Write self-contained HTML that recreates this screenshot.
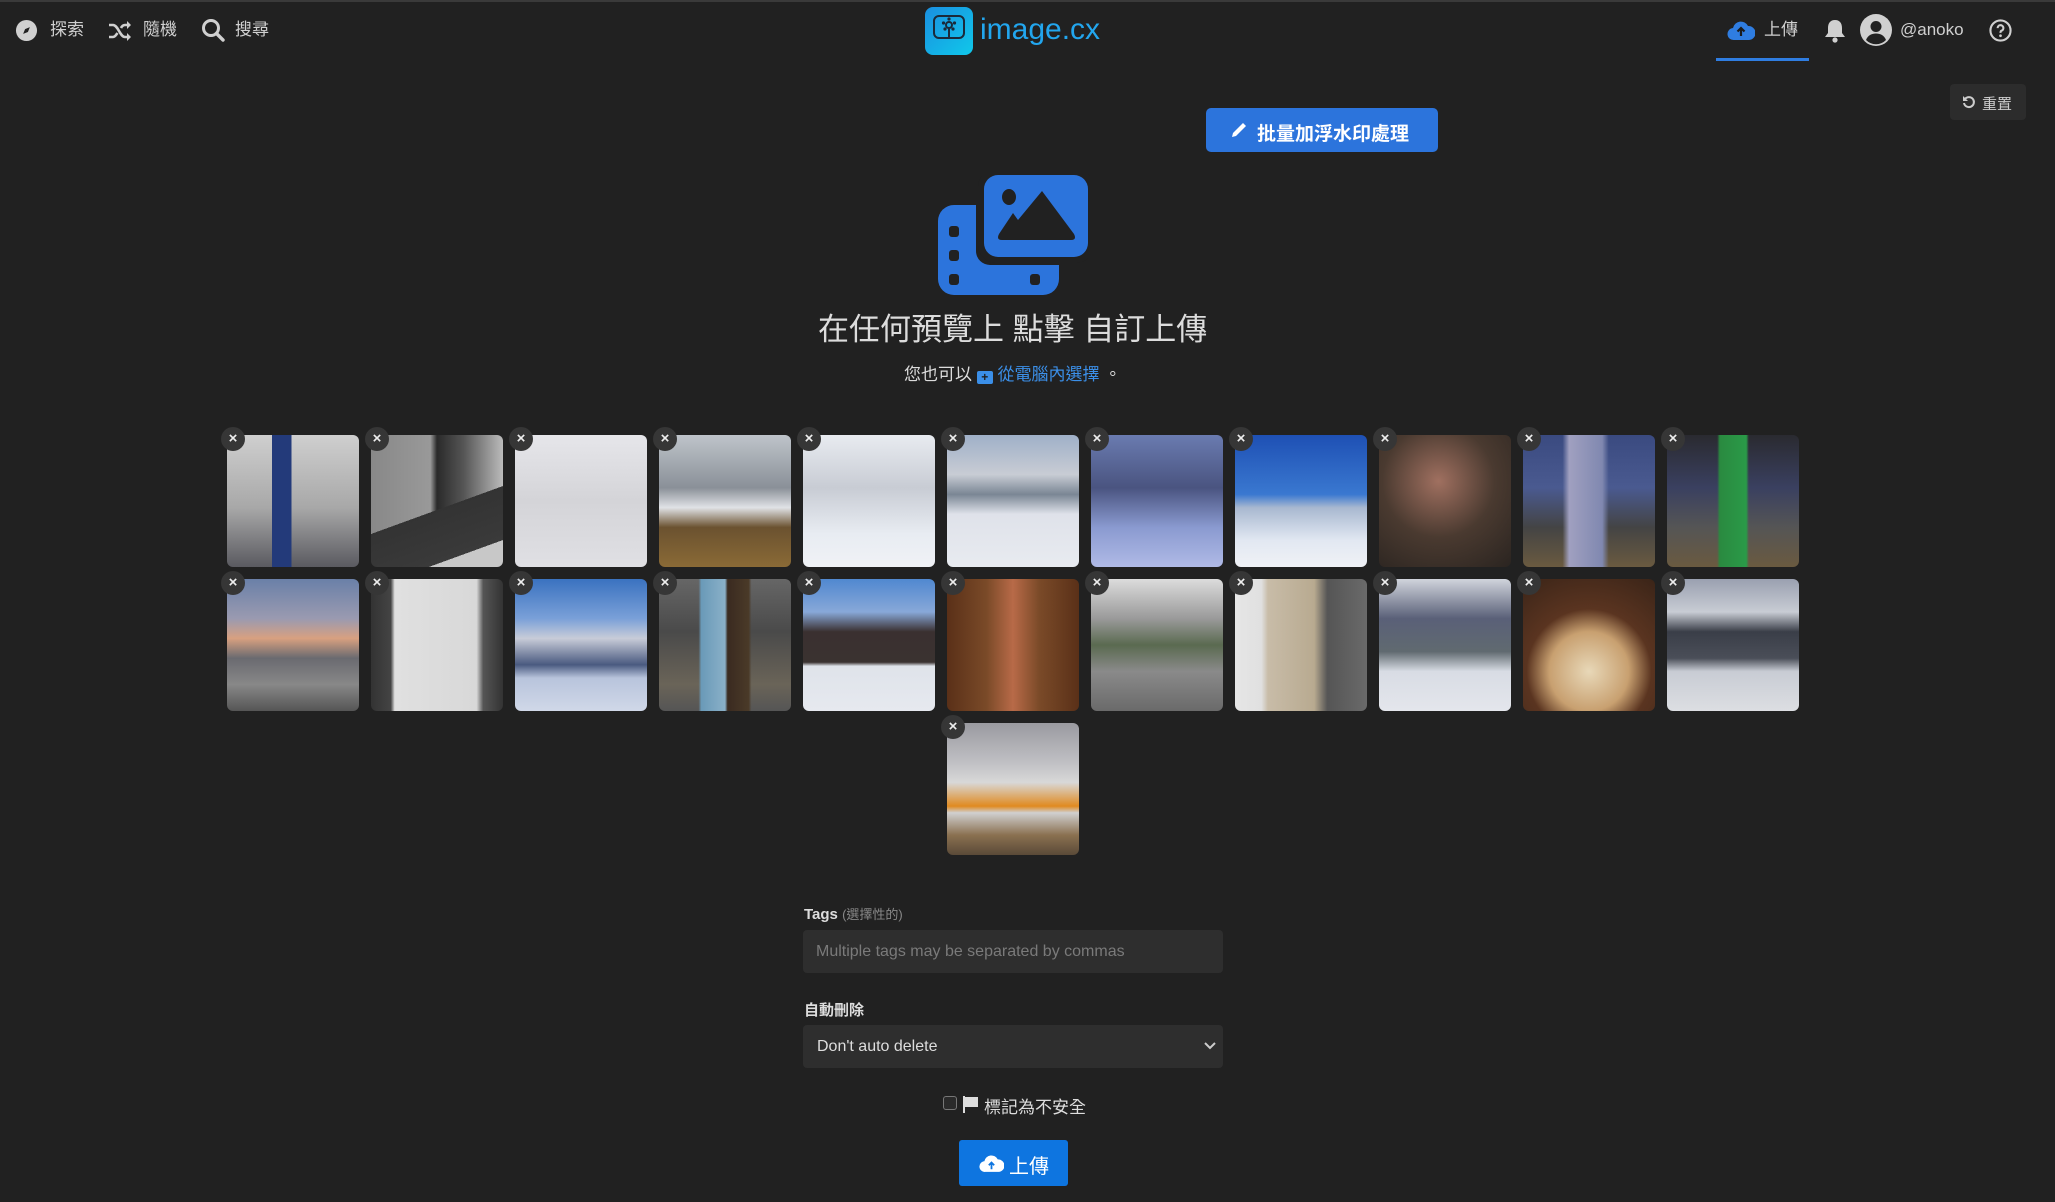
<!DOCTYPE html>
<html><head><meta charset="utf-8"><style>
*{box-sizing:border-box;margin:0;padding:0}
body{width:2055px;height:1202px;background:#212121;position:relative;overflow:hidden;font-family:"Liberation Sans","Noto Sans CJK TC",sans-serif;color:#ddd}
.a{position:absolute}
.nav{color:#d0d0d0;font-size:17px;line-height:20px}
.th{position:absolute;width:132px;height:132px;border-radius:6px;overflow:hidden}
.x{position:absolute;width:24px;height:24px;border-radius:50%;background:#363636;color:#eee;font-size:15px;line-height:24px;text-align:center;font-weight:bold}
</style></head><body>
<div class="a" style="left:0;top:0;width:2055px;height:2px;background:#3a3a3a"></div>
<!-- left nav -->
<svg class="a" style="left:15px;top:19px" width="23" height="23" viewBox="0 0 24 24"><circle cx="12" cy="12" r="11" fill="#d0d0d0"/><path d="M15.5 8.5 L13.5 13.5 L8.5 15.5 L10.5 10.5Z" fill="#212121"/></svg>
<div class="a nav" style="left:50px;top:20px">探索</div>
<svg class="a" style="left:108px;top:20px" width="24" height="22" viewBox="0 0 24 22"><path d="M1 5h4c5 0 7 12 12 12h3M1 17h4c2 0 3-2 4.5-4M13 8c1-2 2-3 4-3h3" stroke="#d0d0d0" stroke-width="2.6" fill="none"/><path d="M19 1l4 4-4 4zM19 13l4 4-4 4z" fill="#d0d0d0"/></svg>
<div class="a nav" style="left:143px;top:20px">隨機</div>
<svg class="a" style="left:201px;top:18px" width="24" height="25" viewBox="0 0 24 25"><circle cx="10" cy="10" r="7.5" stroke="#d0d0d0" stroke-width="3" fill="none"/><path d="M15.5 15.5 L22 22" stroke="#d0d0d0" stroke-width="3.4" stroke-linecap="round"/></svg>
<div class="a nav" style="left:235px;top:20px">搜尋</div>
<!-- logo -->
<div class="a" style="left:925px;top:7px;width:48px;height:48px;border-radius:8px;background:linear-gradient(135deg,#1a8fe0,#10c8ea)"></div>
<div class="a" style="left:933px;top:15px;width:32px;height:24px;border:2.5px solid #1b2a3a;border-radius:6px"></div>
<svg class="a" style="left:937px;top:14px" width="24" height="26" viewBox="0 0 24 26"><circle cx="12" cy="11" r="3" stroke="#1b2a3a" stroke-width="2" fill="none"/><circle cx="12" cy="5" r="1.6" fill="#1b2a3a"/><circle cx="6.5" cy="9" r="1.6" fill="#1b2a3a"/><circle cx="17.5" cy="9" r="1.6" fill="#1b2a3a"/><circle cx="8" cy="15" r="1.6" fill="#1b2a3a"/><circle cx="16" cy="15" r="1.6" fill="#1b2a3a"/><path d="M12 14v10" stroke="#1b2a3a" stroke-width="2"/></svg>
<div class="a" style="left:980px;top:10px;font-size:30px;line-height:40px;color:#22a6ee">image.cx</div>
<!-- right nav -->
<svg class="a" style="left:1727px;top:19px" width="28" height="22" viewBox="0 0 28 22"><path d="M7 21a6 6 0 0 1-1-12 8 8 0 0 1 15-2 6.5 6.5 0 0 1 1 14z" fill="#2f7de1"/><path d="M14 17V9M10.5 12.5 14 9l3.5 3.5" stroke="#1b1b1b" stroke-width="2.2" fill="none"/></svg>
<div class="a nav" style="left:1764px;top:20px">上傳</div>
<div class="a" style="left:1716px;top:58px;width:93px;height:3px;background:#2f7de1"></div>
<svg class="a" style="left:1824px;top:19px" width="22" height="24" viewBox="0 0 22 24"><path d="M11 1c-4.5 0-7 3-7 8v5l-3 4h20l-3-4V9c0-5-2.5-8-7-8z" fill="#d0d0d0"/><circle cx="11" cy="21" r="2.6" fill="#d0d0d0"/></svg>
<svg class="a" style="left:1860px;top:14px" width="32" height="32" viewBox="0 0 32 32"><circle cx="16" cy="16" r="16" fill="#d0d0d0"/><circle cx="16" cy="12.5" r="5.5" fill="#212121"/><path d="M6 26c2-5 6-6.5 10-6.5s8 1.5 10 6.5a14 14 0 0 1-20 0z" fill="#212121"/></svg>
<div class="a nav" style="left:1900px;top:20px">@anoko</div>
<svg class="a" style="left:1989px;top:19px" width="23" height="23" viewBox="0 0 24 24"><circle cx="12" cy="12" r="10.5" stroke="#d0d0d0" stroke-width="2.2" fill="none"/><path d="M9 9.5a3 3 0 1 1 4 2.8c-1 .4-1 1-1 2.2" stroke="#d0d0d0" stroke-width="2.2" fill="none"/><circle cx="12" cy="17.5" r="1.4" fill="#d0d0d0"/></svg>
<!-- reset -->
<div class="a" style="left:1950px;top:84px;width:76px;height:36px;background:#2c2c2c;border-radius:4px"></div>
<svg class="a" style="left:1962px;top:95px" width="14" height="14" viewBox="0 0 14 14"><path d="M3 4a5 5 0 1 1-1 4" stroke="#ccc" stroke-width="2" fill="none"/><path d="M1 1v5h5z" fill="#ccc"/></svg>
<div class="a" style="left:1982px;top:93px;font-size:15px;color:#ccc">重置</div>
<!-- watermark btn -->
<div class="a" style="left:1206px;top:108px;width:232px;height:44px;background:#2c74dc;border-radius:5px"></div>
<svg class="a" style="left:1230px;top:121px" width="18" height="18" viewBox="0 0 18 18"><path d="M2 16 L3 12 L13 2 L16 5 L6 15Z" fill="#fff"/></svg>
<div class="a" style="left:1257px;top:119px;font-size:19px;font-weight:bold;color:#fff">批量加浮水印處理</div>
<!-- big icon -->
<svg class="a" style="left:938px;top:174px" width="152" height="122" viewBox="0 0 152 122"><rect x="0" y="31" width="121" height="90" rx="16" fill="#2c74dc"/><path d="M38 25H130V91H52a14 14 0 0 1-14-14z" fill="#212121"/><rect x="11" y="52" width="10" height="11" rx="3" fill="#212121"/><rect x="11" y="76" width="10" height="11" rx="3" fill="#212121"/><rect x="11" y="100" width="10" height="11" rx="3" fill="#212121"/><rect x="92" y="100" width="10" height="11" rx="3" fill="#212121"/><rect x="40" y="-5" width="116" height="94" rx="18" fill="#212121"/><rect x="46" y="1" width="104" height="82" rx="14" fill="#2c74dc"/><ellipse cx="71" cy="23" rx="7" ry="8" fill="#212121"/><path d="M64 66 Q58 66 61 60 L75 39 L80 46 L104 17 L136 60 Q139 66 133 66Z" fill="#212121"/></svg>
<div class="a" style="left:818px;top:310px;font-size:31px;line-height:40px;color:#dcdcdc;white-space:nowrap">在任何預覽上 點擊 自訂上傳</div>
<div class="a" style="left:904px;top:364px;font-size:17px;line-height:22px;color:#dcdcdc;white-space:nowrap">您也可以 <span style="display:inline-block;width:16px;height:13px;background:#3b8fe8;border-radius:2px;vertical-align:-1px;color:#212121;font-size:12px;line-height:13px;text-align:center;font-weight:bold">+</span> <span style="color:#3b8fe8">從電腦內選擇</span> 。</div>
<!-- thumbnails -->
<div class="th" style="left:227px;top:435px;background:linear-gradient(90deg,transparent 34%,#233a7a 34%,#233a7a 49%,transparent 49%),linear-gradient(180deg,#cfcfcf,#a8a8a8 55%,#5a5a60)"></div>
<div class="th" style="left:371px;top:435px;background:linear-gradient(160deg,transparent 55%,#333 55%,#3a3a3a 85%,#c8c8c8 85%),linear-gradient(90deg,#888 0,#999 45%,#2a2a2a 50%,#555 70%,#bbb)"></div>
<div class="th" style="left:515px;top:435px;background:linear-gradient(180deg,#e6e6ea,#d4d4d8 50%,#e0e0e4)"></div>
<div class="th" style="left:659px;top:435px;background:linear-gradient(180deg,#bfc4ca,#8a9098 40%,#e0e2e6 55%,#6b5230 70%,#8a6a36)"></div>
<div class="th" style="left:803px;top:435px;background:linear-gradient(180deg,#e8ebf0,#c8ccd4 40%,#e8ecf2 75%,#f0f2f6)"></div>
<div class="th" style="left:947px;top:435px;background:linear-gradient(180deg,#9fb0c8,#c8ccd4 30%,#7a8694 45%,#dfe2ea 60%,#e8ebf0)"></div>
<div class="th" style="left:1091px;top:435px;background:linear-gradient(180deg,#6a7bb0,#4a5480 40%,#8a9ad0 70%,#b0bae6)"></div>
<div class="th" style="left:1235px;top:435px;background:linear-gradient(180deg,#1e50b4,#3a78d0 45%,#a8b8d0 55%,#e2e8f2 80%,#f0f2f6)"></div>
<div class="th" style="left:1379px;top:435px;background:radial-gradient(circle at 45% 35%,#a07060,#4a3a30 50%,#2a2420)"></div>
<div class="th" style="left:1523px;top:435px;background:linear-gradient(90deg,transparent 30%,#a0a0c0 35%,#8088b0 60%,transparent 65%),linear-gradient(180deg,#3a4a80,#4a5a90 40%,#444 70%,#6a5a40)"></div>
<div class="th" style="left:1667px;top:435px;background:linear-gradient(90deg,transparent 38%,#2a8a40 40%,#2a9a48 60%,transparent 62%),linear-gradient(180deg,#2a2a30,#3a4060 40%,#555 70%,#6a5a40)"></div>

<div class="th" style="left:227px;top:579px;background:linear-gradient(180deg,#6a80a8,#9a9ab0 30%,#d8a080 45%,#6a6a70 60%,#888 80%,#555)"></div>
<div class="th" style="left:371px;top:579px;background:linear-gradient(90deg,#333 0,#444 15%,#e0e0e0 18%,#d8d8d8 80%,#555 85%,#333)"></div>
<div class="th" style="left:515px;top:579px;background:linear-gradient(180deg,#3a72c0,#7aa0d8 30%,#c8ccd8 45%,#4a5a80 65%,#b8c4dc 75%,#d0d8e8)"></div>
<div class="th" style="left:659px;top:579px;background:linear-gradient(90deg,transparent 30%,#6a9ab8 32%,#8ab0c8 50%,#3a2a20 52%,#4a3a28 68%,transparent 70%),linear-gradient(180deg,#666,#4a4a4a 40%,#6a6458 80%,#555)"></div>
<div class="th" style="left:803px;top:579px;background:linear-gradient(180deg,#5088d0,#88a8d8 25%,#3a3030 40%,#3a3230 63%,#dfe3ea 66%,#e6e9ef)"></div>
<div class="th" style="left:947px;top:579px;background:linear-gradient(90deg,#5a3018,#7a4a28 30%,#b86a48 50%,#7a4a28 70%,#5a3018)"></div>
<div class="th" style="left:1091px;top:579px;background:linear-gradient(180deg,#dcdcdc,#9a9a9a 30%,#5a6a50 50%,#8a8a8a 70%,#6a6a6a)"></div>
<div class="th" style="left:1235px;top:579px;background:linear-gradient(90deg,#e6e6e6 0,#e0e0e0 20%,#c8bca8 25%,#b8aa90 60%,#555 70%,#6a6a6a)"></div>
<div class="th" style="left:1379px;top:579px;background:linear-gradient(180deg,#d0d4dc,#5a6078 30%,#606a70 55%,#d8dce4 70%,#e4e6ec)"></div>
<div class="th" style="left:1523px;top:579px;background:radial-gradient(circle at 50% 70%,#e8d8b8,#c8a070 35%,#5a3420 55%,#3a2418)"></div>
<div class="th" style="left:1667px;top:579px;background:linear-gradient(180deg,#9aa0b0,#c8ccd4 25%,#3a3e48 40%,#4a4e58 60%,#c8ccd4 70%,#dcdee2)"></div>

<div class="th" style="left:947px;top:723px;background:linear-gradient(180deg,#9a9aa0,#c0c0c4 30%,#d8d8d8 45%,#e08a20 63%,#d0d0d0 68%,#8a7050 85%,#5a4a38)"></div>
<!-- close buttons -->
<div class="x" style="left:221px;top:427px">×</div><div class="x" style="left:365px;top:427px">×</div><div class="x" style="left:509px;top:427px">×</div><div class="x" style="left:653px;top:427px">×</div><div class="x" style="left:797px;top:427px">×</div><div class="x" style="left:941px;top:427px">×</div><div class="x" style="left:1085px;top:427px">×</div><div class="x" style="left:1229px;top:427px">×</div><div class="x" style="left:1373px;top:427px">×</div><div class="x" style="left:1517px;top:427px">×</div><div class="x" style="left:1661px;top:427px">×</div>
<div class="x" style="left:221px;top:571px">×</div><div class="x" style="left:365px;top:571px">×</div><div class="x" style="left:509px;top:571px">×</div><div class="x" style="left:653px;top:571px">×</div><div class="x" style="left:797px;top:571px">×</div><div class="x" style="left:941px;top:571px">×</div><div class="x" style="left:1085px;top:571px">×</div><div class="x" style="left:1229px;top:571px">×</div><div class="x" style="left:1373px;top:571px">×</div><div class="x" style="left:1517px;top:571px">×</div><div class="x" style="left:1661px;top:571px">×</div>
<div class="x" style="left:941px;top:715px">×</div>
<!-- form -->
<div class="a" style="left:804px;top:904px;font-size:15px;font-weight:bold;color:#ddd">Tags <span style="font-weight:normal;font-size:13px;color:#888">(選擇性的)</span></div>
<div class="a" style="left:803px;top:930px;width:420px;height:43px;background:#2e2e2e;border-radius:4px;font-size:16px;color:#7a7a7a;padding:13px 13px 0">Multiple tags may be separated by commas</div>
<div class="a" style="left:804px;top:999px;font-size:15px;font-weight:bold;color:#ddd">自動刪除</div>
<div class="a" style="left:803px;top:1025px;width:420px;height:43px;background:#2e2e2e;border-radius:4px;font-size:16px;color:#ddd;padding:13px 14px 0">Don't auto delete</div>
<svg class="a" style="left:1203px;top:1040px" width="14" height="12" viewBox="0 0 14 12"><path d="M2 3l5 5 5-5" stroke="#ccc" stroke-width="2" fill="none"/></svg>
<div class="a" style="left:943px;top:1096px;width:14px;height:14px;border:1.5px solid #777;border-radius:3px;background:#2a2a2a"></div>
<svg class="a" style="left:963px;top:1096px" width="16" height="17" viewBox="0 0 16 17"><path d="M1 0v17" stroke="#ddd" stroke-width="2"/><path d="M2 1h13v10H2z" fill="#ddd"/></svg>
<div class="a" style="left:984px;top:1093px;font-size:17px;color:#ddd">標記為不安全</div>
<div class="a" style="left:959px;top:1140px;width:109px;height:46px;background:#0e75e0;border-radius:3px"></div>
<svg class="a" style="left:979px;top:1153px" width="25" height="20" viewBox="0 0 28 22"><path d="M7 21a6 6 0 0 1-1-12 8 8 0 0 1 15-2 6.5 6.5 0 0 1 1 14z" fill="#fff"/><path d="M14 18V11M11 13.5 14 10.5l3 3" stroke="#0e75e0" stroke-width="2" fill="none"/></svg>
<div class="a" style="left:1009px;top:1150px;font-size:20px;color:#fff">上傳</div>
</body></html>
